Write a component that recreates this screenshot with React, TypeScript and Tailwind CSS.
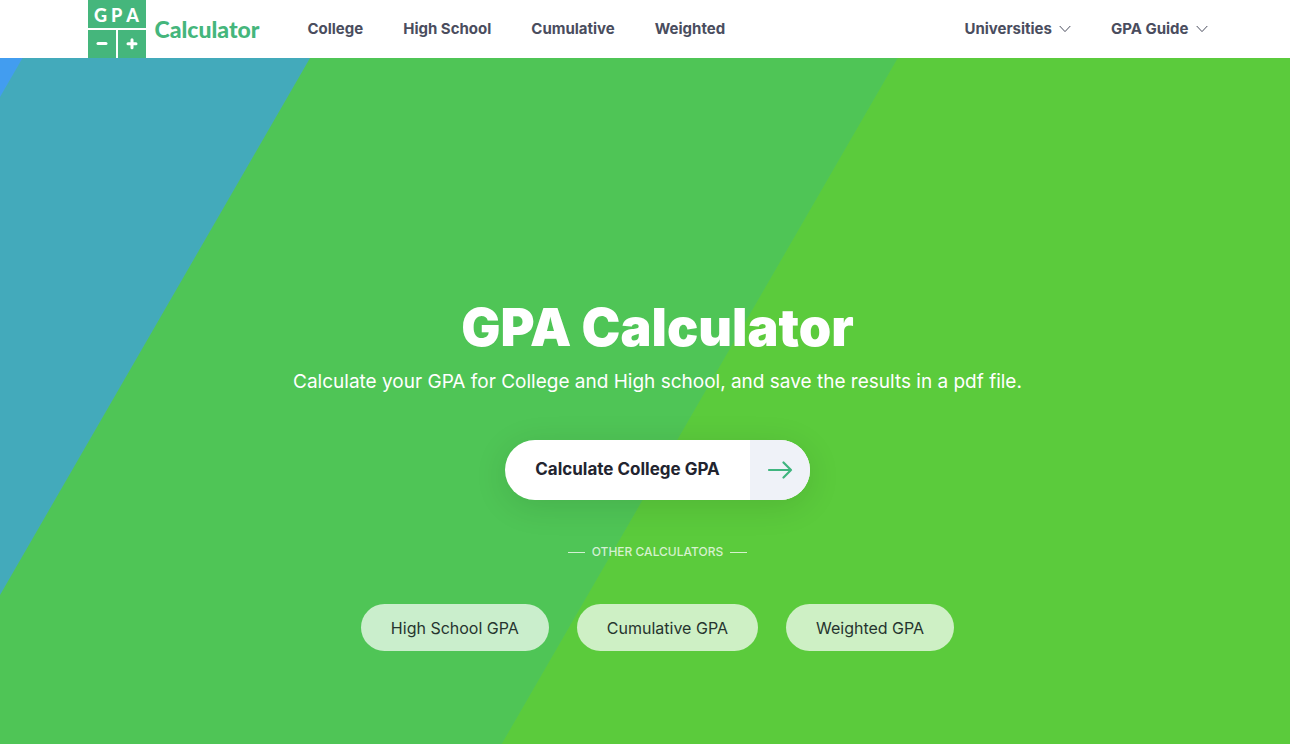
interface NavItem {
  label: string;
  href: string;
}

const mainLinks: NavItem[] = [
  { label: 'College', href: '#college' },
  { label: 'High School', href: '#high-school' },
  { label: 'Cumulative', href: '#cumulative' },
  { label: 'Weighted', href: '#weighted' },
];

const menus = ['Universities', 'GPA Guide'];

const otherCalculators: NavItem[] = [
  { label: 'High School GPA', href: '#high-school' },
  { label: 'Cumulative GPA', href: '#cumulative' },
  { label: 'Weighted GPA', href: '#weighted' },
];

function Logo() {
  return (
    <a href="#home" className="flex items-center gap-[9px] text-[#45b67c]">
      <span className="grid h-[58px] w-[58px] grid-cols-2 grid-rows-2 gap-[2px] text-white">
        <span className="col-span-2 flex items-center justify-center gap-1 bg-[#45b67c] pt-[2px] font-['Lato'] text-[18px] leading-none font-black">
          <span>G</span>
          <span>P</span>
          <span>A</span>
        </span>
        <span className="flex items-center justify-center bg-[#45b67c]">
          <svg width="12" height="12" viewBox="0 0 12 12" fill="none" stroke="currentColor" strokeWidth="3" strokeLinecap="round">
            <path d="M2 5.5h8" />
          </svg>
        </span>
        <span className="flex items-center justify-center bg-[#45b67c]">
          <svg width="12" height="12" viewBox="0 0 12 12" fill="none" stroke="currentColor" strokeWidth="3" strokeLinecap="round">
            <path d="M2 5.8h8M6 1.8v8" />
          </svg>
        </span>
      </span>
      <span className="font-['Lato'] text-[23px] leading-7 font-black">Calculator</span>
    </a>
  );
}

function ChevronIcon() {
  return (
    <svg width="12" height="8" viewBox="0 0 12 8" fill="none" stroke="currentColor" strokeWidth="1">
      <path d="M0.7 1l5.3 5.6L11.3 1" />
    </svg>
  );
}

function ArrowIcon() {
  return (
    <svg
      width="26"
      height="18"
      viewBox="0 0 26 18"
      fill="none"
      stroke="currentColor"
      strokeWidth="2.2"
      strokeLinecap="round"
      strokeLinejoin="round"
    >
      <path d="M2 9h22M16.5 1.5L24 9l-7.5 7.5" />
    </svg>
  );
}

export default function App() {
  return (
    <div className="flex min-h-screen flex-col font-['Inter',sans-serif]">
      {/* Header */}
      <header className="bg-white pl-[25px]">
        <div className="mx-auto flex h-[58px] max-w-[1140px] items-center text-[15px] font-bold text-[#4a4d5e]">
          <Logo />
          <nav className="ml-12 flex gap-10">
            {mainLinks.map((link) => (
              <a key={link.label} href={link.href}>
                {link.label}
              </a>
            ))}
          </nav>
          <div className="mr-5 ml-auto flex gap-10">
            {menus.map((menu) => (
              <button key={menu} type="button" className="flex items-center gap-[7px]">
                {menu}
                <ChevronIcon />
              </button>
            ))}
          </div>
        </div>
      </header>

      {/* Hero */}
      <main className="flex flex-1 flex-col items-center justify-end bg-[linear-gradient(120deg,#429df0_19px,#43aabb_20px,#43aabb_268px,#4fc556_269px,#4fc556_777px,#5bcb3c_778px)] pb-[93px] pl-[25px] text-center text-white">
        <h1 className="text-[52px] leading-[60px] font-black">GPA Calculator</h1>
        <p className="mt-[10px] text-[19px] leading-7">
          Calculate your GPA for College and High school, and save the results in a pdf file.
        </p>

        <a
          href="#college"
          className="mt-11 flex h-[60px] overflow-hidden rounded-full bg-white text-[17px] font-bold text-[#22242f] shadow-[0_6px_34px_rgba(0,0,0,0.11)]"
        >
          <span className="flex items-center px-[30px]">Calculate College GPA</span>
          <span className="flex w-[60px] items-center justify-center bg-[#eff2f8] text-[#3fb57f]">
            <ArrowIcon />
          </span>
        </a>

        <div className="mt-[42px] flex items-center gap-[7px] text-[12px] leading-5 font-medium text-white/75">
          <span className="h-px w-[17px] bg-white/75" />
          <h2>OTHER CALCULATORS</h2>
          <span className="h-px w-[17px] bg-white/75" />
        </div>

        <div className="mt-[42px] flex flex-wrap justify-center gap-7">
          {otherCalculators.map((item) => (
            <a
              key={item.label}
              href={item.href}
              className="flex h-[47px] items-center rounded-full bg-white/70 px-[30px] text-[16px] text-[#26352f]"
            >
              {item.label}
            </a>
          ))}
        </div>
      </main>
    </div>
  );
}
